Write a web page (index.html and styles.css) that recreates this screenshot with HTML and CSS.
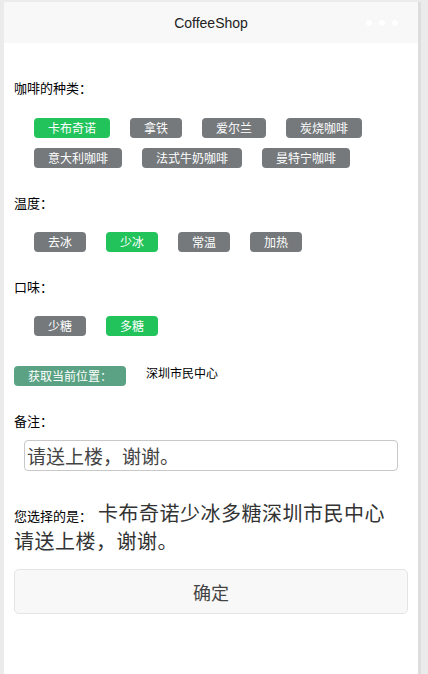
FILE: index.html
```html
<!DOCTYPE html>
<html lang="zh-CN">
<head>
<meta charset="utf-8">
<title>CoffeeShop</title>
<link rel="stylesheet" href="styles.css">
</head>
<body>
<div class="phone">
  <header class="nav">
    <span class="title">CoffeeShop</span>
    <span class="dots"><i></i><i></i><i></i></span>
  </header>
  <main class="content">
    <div class="label first">咖啡的种类：</div>
    <div class="options">
      <span class="pill on">卡布奇诺</span>
      <span class="pill">拿铁</span>
      <span class="pill">爱尔兰</span>
      <span class="pill">炭烧咖啡</span>
      <span class="pill">意大利咖啡</span>
      <span class="pill">法式牛奶咖啡</span>
      <span class="pill">曼特宁咖啡</span>
    </div>

    <div class="label">温度：</div>
    <div class="options">
      <span class="pill">去冰</span>
      <span class="pill on">少冰</span>
      <span class="pill">常温</span>
      <span class="pill">加热</span>
    </div>

    <div class="label">口味：</div>
    <div class="options">
      <span class="pill">少糖</span>
      <span class="pill on">多糖</span>
    </div>

    <div class="location">
      <span class="loc-btn">获取当前位置：</span>
      <span class="loc-text">深圳市民中心</span>
    </div>

    <div class="label">备注：</div>
    <input class="remark" type="text" value="请送上楼，谢谢。">

    <div class="result">
      <div class="result-line"><span class="result-label">您选择的是：</span><span class="result-value first-value">卡布奇诺少冰多糖深圳市民中心</span></div>
      <div class="result-line"><span class="result-value">请送上楼，谢谢。</span></div>
    </div>

    <button class="confirm" type="button">确定</button>
  </main>
</div>
</body>
</html>
```

FILE: styles.css
```css
html, body {
  margin: 0;
  padding: 0;
  height: 100%;
  overflow: hidden;
}
body {
  background: #ebebeb;
  font-family: "Noto Sans CJK SC", "Liberation Sans", sans-serif;
}
.phone {
  margin: 2px 0 0 4px;
  width: 414px;
  height: calc(100vh - 2px);
  background: #ffffff;
  border-right: 3px solid #dddddd;
  box-sizing: content-box;
}
.nav {
  position: relative;
  height: 41px;
  background: #f8f8f8;
  display: flex;
  align-items: center;
  justify-content: center;
}
.title {
  font-family: "Liberation Sans", Arial, sans-serif;
  font-size: 14px;
  color: #222;
}
.dots {
  position: absolute;
  right: 20px;
  top: 18px;
  display: flex;
  gap: 7px;
}
.dots i {
  display: block;
  width: 6px;
  height: 6px;
  border-radius: 50%;
  background: #ffffff;
  box-shadow: 0 0 1px rgba(0,0,0,0.03);
}
.content {
  padding: 0 10px;
}
.label {
  margin-top: 26px;
  font-size: 13px;
  line-height: 18px;
  color: #000;
}
.label.first {
  margin-top: 36px;
}
.options {
  margin-top: 20px;
  padding-left: 20px;
  display: flex;
  flex-wrap: wrap;
  column-gap: 20px;
  row-gap: 10px;
}
.label.first + .options {
  margin-top: 21px;
}
.pill {
  display: inline-block;
  height: 20px;
  line-height: 20px;
  padding: 0 14px;
  font-size: 12px;
  color: #fff;
  background: #75797c;
  border-radius: 4px;
}
.pill.on {
  background: #22c35b;
}
.location {
  margin-top: 30px;
  display: flex;
  align-items: flex-start;
  gap: 20px;
}
.loc-btn {
  height: 20px;
  line-height: 20px;
  padding: 0 14px;
  font-size: 12px;
  color: #fff;
  background: #5aa283;
  border-radius: 4px;
}
.loc-text {
  font-size: 12px;
  line-height: 14px;
  color: #000;
}
.remark {
  display: block;
  margin: 10px 0 0 10px;
  width: 374px;
  height: 31px;
  box-sizing: border-box;
  border: 1px solid #c8c8c8;
  border-radius: 4px;
  padding: 0 2px;
  font-family: "Noto Sans CJK SC", sans-serif;
  font-size: 19px;
  color: #444;
  background: #fff;
  outline: none;
}
.result {
  margin-top: 28px;
}
.result-line {
  display: flex;
  align-items: baseline;
  height: 28px;
  line-height: 28px;
}
.result-label {
  font-size: 13px;
  color: #000;
}
.result-value {
  font-size: 20px;
  letter-spacing: 0.5px;
  color: #333;
}
.first-value {
  margin-left: 6px;
}
.confirm {
  display: block;
  margin-top: 14px;
  width: 394px;
  height: 45px;
  background: #f8f8f8;
  border: 1px solid #e4e4e4;
  border-radius: 5px;
  font-family: "Noto Sans CJK SC", sans-serif;
  font-size: 18px;
  color: #444;
  padding: 0;
}
```
